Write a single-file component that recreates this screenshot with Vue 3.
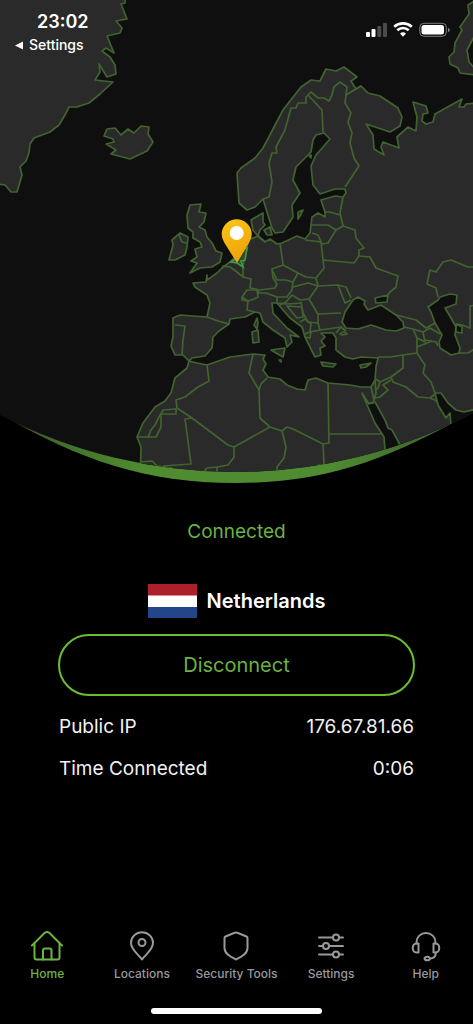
<template>
  <div class="app">
    <header class="top">
      <svg class="globe" viewBox="0 0 473 490" aria-hidden="true">
        <defs>
          <clipPath id="globe-clip">
            <path d="M0 0H473V413A511 511 0 0 1 0 415Z" />
          </clipPath>
          <linearGradient id="rim" x1="0" x2="1" y1="0" y2="0">
            <stop offset="0" stop-color="#2c3a24" />
            <stop offset="0.1" stop-color="#3f6a2b" />
            <stop offset="0.3" stop-color="#4f8b30" />
            <stop offset="0.7" stop-color="#4f8b30" />
            <stop offset="1" stop-color="#38582a" />
          </linearGradient>
          <linearGradient id="pin" x1="0" x2="0.4" y1="0" y2="1">
            <stop offset="0" stop-color="#fbc812" />
            <stop offset="1" stop-color="#eda20c" />
          </linearGradient>
        </defs>
        <path fill="url(#rim)" d="M0 414C80 460 145 483 236 483S389 459 473 412V405H0Z" />
        <g clip-path="url(#globe-clip)">
          <rect width="473" height="490" fill="#0f0f0f" />
          <path v-for="(d, i) in land" :key="'l' + i" class="land" :d="d" />
          <path v-for="(d, i) in seas" :key="'s' + i" class="sea" :d="d" />
          <path v-for="(d, i) in borders" :key="'b' + i" class="border" :d="d" />
          <path class="active" d="M231 262L237 258L242 249L247 248L245 260L241 261L243 267L237 263Z" />
        </g>
        <path fill="url(#pin)" d="M237 263L224.200 242.500A15 15 0 1 1 249.200 242.500Z" />
        <circle cx="236.700" cy="233" r="7" fill="#fff" />
      </svg>

      <div class="status">
        <div class="status-left">
          <span class="time">23:02</span>
          <a class="back" href="#">
            <svg width="8" height="9" viewBox="0 0 8 9" aria-hidden="true"><path d="M0 4.500L8 0.500V8.500Z" fill="#fff" /></svg>
            Settings
          </a>
        </div>
        <svg class="signals" width="86" height="18" viewBox="0 0 86 18" aria-hidden="true">
          <g fill="#fff">
            <rect x="1" y="11" width="4" height="5" rx="1" />
            <rect x="6.500" y="8" width="4" height="8" rx="1" />
            <rect x="12.300" y="5" width="4" height="11" rx="1" opacity="0.25" />
            <rect x="18" y="2" width="4" height="14" rx="1" opacity="0.25" />
          </g>
          <g fill="none" stroke="#fff" stroke-width="2.600">
            <path d="M29.200 5.800A13 13 0 0 1 46.800 5.800" />
            <path d="M32.300 9.300A8.400 8.400 0 0 1 43.700 9.300" />
          </g>
          <path d="M35 12.500A4.500 4.500 0 0 1 41 12.500L38 15.800Z" fill="#fff" />
          <rect x="54.800" y="2.300" width="26.500" height="13" rx="4" fill="none" stroke="#fff" stroke-opacity="0.450" />
          <rect x="56.500" y="4" width="22.500" height="9.600" rx="2.500" fill="#fff" />
          <path d="M83 7V11Q84.800 10.500 84.800 9T83 7Z" fill="#fff" opacity="0.500" />
        </svg>
      </div>
    </header>

    <main class="content">
      <p class="state">Connected</p>
      <div class="country">
        <svg class="flag" width="49" height="34" viewBox="0 0 49 34" aria-hidden="true">
          <rect width="49" height="34" fill="#fff" />
          <rect width="49" height="11.500" fill="#ae1f2c" />
          <rect y="23" width="49" height="11" fill="#23468b" />
        </svg>
        <h1>Netherlands</h1>
      </div>
      <button class="disconnect" type="button">Disconnect</button>
      <dl class="details">
        <div v-for="row in details" :key="row.label">
          <dt>{{ row.label }}</dt>
          <dd>{{ row.value }}</dd>
        </div>
      </dl>
    </main>

    <nav class="tabs">
      <a
        v-for="tab in tabs"
        :key="tab.name"
        href="#"
        :class="{ current: tab.name === current }"
        @click.prevent="current = tab.name"
      >
        <svg width="32" height="32" viewBox="0 0 32 32" aria-hidden="true">
          <path v-for="d in tab.icon" :key="d" :d="d" />
        </svg>
        <span>{{ tab.name }}</span>
      </a>
    </nav>
    <div class="home-bar"></div>
  </div>
</template>

<script setup>
import { ref } from 'vue'

const current = ref('Home')

const details = [
  { label: 'Public IP', value: '176.67.81.66' },
  { label: 'Time Connected', value: '0:06' },
]

const tabs = [
  {
    name: 'Home',
    icon: [
      'M1 15.500L13.500 3Q16 1 18.500 3L31 15.500',
      'M3.500 13.500V27.500Q3.500 29.500 5.500 29.500H26.500Q28.500 29.500 28.500 27.500V13.500',
      'M12 29.500V20.500Q12 18.500 14 18.500H18.500Q20.500 18.500 20.500 20.500V29.500',
    ],
  },
  {
    name: 'Locations',
    icon: [
      'M16 29.500C13 25 5 20 5 12.800A11 10.500 0 0 1 27 12.800C27 20 19 25 16 29.500Z',
      'M12.500 12.500A3.500 3.500 0 0 1 19.500 12.500A3.500 3.500 0 0 1 12.500 12.500Z',
    ],
  },
  {
    name: 'Security Tools',
    icon: ['M16 2.500Q17 2.500 18 3L26.500 6.500Q27.500 7 27.500 8.500V18C27.500 24 21 27 16 29.500C11 27 4.500 24 4.500 18V8.500Q4.500 7 5.500 6.500L14 3Q15 2.500 16 2.500Z'],
  },
  {
    name: 'Settings',
    icon: [
      'M4 7.500H18M24.500 7.500H28',
      'M4 16H7.500M14 16H28',
      'M4 24.500H18M24.500 24.500H28',
      'M18 7.500A3 3 0 0 1 24 7.500A3 3 0 0 1 18 7.500Z',
      'M8 16A3 3 0 0 1 14 16A3 3 0 0 1 8 16Z',
      'M18 24.500A3 3 0 0 1 24 24.500A3 3 0 0 1 18 24.500Z',
    ],
  },
  {
    name: 'Help',
    icon: [
      'M6.500 13.500V12A9.500 9 0 0 1 25.500 12V13.500',
      'M8.500 13.500V22.500H6.500C1.500 22.500 1.500 13.500 6.500 13.500Z',
      'M23.500 13.500V22.500H25.500C30.500 22.500 30.500 13.500 25.500 13.500Z',
      'M26 22.500Q25.500 28.500 20 28.500',
      'M14.500 28.500A2.800 2.300 0 0 1 20 28.500A2.800 2.300 0 0 1 14.500 28.500Z',
    ],
  },
]

const land = [
  // Greenland
  'M-3 -3L125 -3L125 3L121 4L127 19L116 21L122 28L120 33L107 36L114 53L106 48L102 51L110 57L115 65L116 74L107 77L99 64L100 72L95 80L113 82L100 94L89 103L77 107L69 107L65 115L59 125L50 132L34 138L30 144L29 153L26 161L20 167L22 175L17 192L11 192L5 185L-3 184Z',
  // Iceland
  'M104 136L107 129L115 128L121 135L128 129L134 133L141 126L149 127L148 134L153 142L147 151L130 159L111 154L116 150L106 144L114 142L113 139Z',
  // Novaya Zemlya
  'M476 0L468 5L469 14L460 27L462 30L455 43L454 52L449 57L450 64L458 68L460 73L476 75Z',
  // Europe, Asia and Africa
  'M476 103L466 104L464 107L459 107L462 99L435 114L433 122L426 124L422 121L423 114L428 113L426 106L413 102L417 117L416 131L408 127L397 137L399 148L383 142L381 147L384 155L374 149L373 135L366 124L390 132L400 126L402 117L398 108L380 96L368 93L361 86L356 89L351 81L357 77L344 67L336 71L326 69L320 81L311 80L301 87L283 110L263 148L255 158L241 168L237 173L239 203L247 210L255 207L263 199L272 228L275 233L283 232L287 226L293 217L292 205L300 193L293 180L296 167L311 152L313 140L316 135L324 133L330 139L316 155L311 166L313 185L320 194L335 189L345 189L346 193L343 197L335 196L321 200L325 212L325 217L318 213L312 217L310 233L305 239L297 236L282 243L277 244L270 239L265 242L257 235L253 230L251 220L263 213L263 222L265 225L260 230L258 236L248 240L247 250L239 254L230 262L222 268L217 273L207 280L207 275L206 282L193 283L195 287L207 295L210 303L207 317L180 315L173 318L173 337L171 346L175 355L183 355L189 361L192 358L205 356L212 348L213 337L219 331L229 324L230 319L245 317L255 312L260 313L263 322L273 330L285 338L287 347L292 342L290 335L299 337L287 328L273 313L272 303L277 303L283 310L290 318L302 327L305 337L308 343L315 357L321 355L320 348L325 346L321 341L325 337L321 333L333 333L336 338L336 350L345 357L353 359L361 357L378 358L376 367L375 380L371 387L361 387L350 385L328 383L316 378L308 380L305 390L297 389L287 385L280 379L268 377L263 370L266 364L263 359L265 355L253 354L230 357L207 365L197 363L189 361L187 368L175 378L171 393L165 401L155 407L143 423L137 437L141 447L140 490L476 490Z',
  // Great Britain
  'M190 205L201 204L199 212L206 213L204 222L199 227L205 230L207 237L212 243L216 251L222 253L220 262L212 267L200 268L190 273L197 263L191 261L197 257L195 249L202 247L200 242L193 238L193 232L188 228L187 215Z',
  // Ireland
  'M169 260L173 245L172 240L180 233L188 237L187 247L185 255L175 260Z',
  // islands
  'M257 318L254 325L257 329L258 323Z',
  'M252 332L258 330L259 342L253 343Z',
  'M271 350L285 348L283 357Z',
  'M321 362L336 364L333 367L323 366Z',
  'M360 365L371 363L366 367L361 368Z',
  'M264 230L270 227L272 235L267 235Z',
  'M298 212L303 210L300 216L298 219Z',
  'M309 156L311 155L311 158Z',
  'M279 360L281 360L281 362Z',
]

const seas = [
  // Kara Sea
  'M476 33L467 50L469 62L476 70Z',
  // Black Sea and Azov
  'M358 297L365 301L364 304L368 310L381 305L396 315L403 322L404 328L396 331L386 330L371 325L358 329L346 328L342 322L345 312L353 300Z',
  'M375 298L388 295L387 302L376 303Z',
  // Marmara
  'M340 334L344 332L347 334L342 335Z',
  // Caspian
  'M440 297L450 294L457 295L456 304L445 308L448 313L451 318L456 327L455 335L460 348L459 353L451 355L440 348L439 342L442 335L435 323L431 312L428 307L438 300Z',
  'M456 324L462 327L462 333L456 332Z',
  // Red Sea
  'M362 393L369 404L375 402L385 420L388 428L392 430L400 445L393 452L385 450L384 437L375 423L368 407Z',
  // Persian Gulf
  'M435 393L441 393L448 403L456 410L464 412L476 409L476 422L451 427L450 413L446 418L438 405Z',
]

const borders = [
  // Nordics and Baltics
  'M361 86L346 95L347 87L340 82L334 87L332 95L329 101L324 98L318 98L311 92L306 97L306 103L298 103L296 108L291 108L285 130L276 147L277 153L272 153L269 163L272 182L269 197L263 199',
  'M308 95L322 110L323 132',
  'M346 95L345 103L351 113L348 122L352 133L350 143L354 158L359 166L345 187',
  'M343 197L340 213L343 226L355 230L356 238L364 248L359 250L359 256L370 257L376 268L398 276L396 287L390 292L387 296',
  'M325 212L330 212L340 215',
  'M311 225L328 225L336 230L343 226',
  'M336 230L328 243L322 244L318 235L312 233',
  'M305 240L321 242L323 260L324 268L316 278',
  'M323 260L354 263L359 256',
  // Central and eastern Europe
  'M316 278L318 286L338 285L345 303L351 300',
  'M338 285L346 287L351 298',
  'M318 286L309 299L318 314L341 313',
  'M309 299L300 300L292 295',
  'M316 278L306 277L298 273',
  'M293 287L308 283L318 286',
  'M301 302L303 313L308 322L318 323L320 330L341 327L346 331',
  'M318 314L318 323',
  'M300 322L305 319L311 324L310 332L305 334',
  'M310 332L320 330',
  'M305 337L310 338L311 332',
  'M341 327L336 333',
  'M258 236L265 242',
  'M280 243L282 257L283 265L272 269L273 278L277 284L275 288L260 290L250 288L251 279L243 277L243 267L245 255',
  'M283 265L298 273L293 282L286 280L277 280L272 270',
  'M293 282L292 290L287 297L277 297L266 293L259 293L258 290',
  'M292 295L286 302L280 305',
  'M277 297L277 303L287 304L302 303',
  'M287 306L302 307L303 317L297 318Z',
  'M242 297L247 290L257 290L258 297L254 299L248 301Z',
  'M242 297L242 300L248 301L247 310L255 312',
  'M222 266L230 267L237 272L243 277',
  'M207 317L218 321L229 324',
  'M175 325L185 326L183 340L182 355',
  'M179 235L182 242L187 243',
  // Caucasus and Central Asia
  'M396 315L416 320L426 328L435 323',
  'M404 327L413 329L423 332L430 328L440 334',
  'M413 329L417 338L417 353L403 355L390 357L378 357',
  'M417 338L425 342L423 332',
  'M425 340L436 342L438 346',
  'M417 347L427 343L432 341',
  'M476 267L468 267L451 260L443 262L436 272L430 270L427 284L436 288L438 297',
  'M476 305L470 306L470 328L462 325L456 324',
  'M459 353L468 353L476 348',
  // Middle East
  'M403 355L403 368L391 377L380 382L376 379',
  'M417 353L425 365L423 373L431 382L435 393',
  'M391 377L393 382L406 387L418 397L430 398L435 394',
  'M391 380L383 385L388 390L380 397L375 398',
  'M375 380L376 393L373 403L369 403',
  'M380 382L378 388L376 390M371 387L374 400',
  'M430 398L435 400L438 403',
  // Africa
  'M328 383L329 443L323 444L324 465L318 465',
  'M329 434L383 434',
  'M323 444L293 429L287 427L282 431L270 427L260 418L259 390L249 373L253 354',
  'M259 390L261 384L267 378',
  'M270 427L234 447L228 445L192 418L177 408L176 400L185 397L198 387L209 381L207 365',
  'M234 447L234 457L228 465L217 467L207 468L202 474',
  'M217 467L217 476',
  'M176 408L176 414L161 414L161 427L156 437L137 437',
  'M176 409L163 410L159 417L155 425L151 430L148 437',
  'M192 418L185 419L191 464L163 466',
  'M140 462L152 461L157 466L172 468',
  'M282 431L286 447L284 458L277 467L277 476',
]
</script>

<style>
html,
body {
  background: #000;
}
body {
  margin: 0;
}
</style>

<style scoped>
.app {
  display: flex;
  flex-direction: column;
  min-height: 100vh;
  background: #000;
  color: #f2f2f2;
  font-family: Inter, "Liberation Sans", sans-serif;
}
.top {
  position: relative;
}
.globe {
  display: block;
  width: 100%;
  height: auto;
}
.land,
.sea,
.border {
  stroke: #41632f;
  stroke-width: 1.7;
  stroke-linejoin: round;
}
.land {
  fill: #2a2a2a;
}
.sea {
  fill: #0f0f0f;
}
.border {
  fill: none;
}
.active {
  fill: #2a4a2a;
  stroke: #3f9a44;
  stroke-width: 1.7;
}
/* status bar lies over the globe */
.status {
  position: absolute;
  top: 0;
  left: 0;
  right: 0;
  display: flex;
  justify-content: space-between;
  padding: 10px 22px 0 15px;
}
.status-left {
  display: flex;
  flex-direction: column;
}
.time {
  padding-left: 22px;
  font-size: 18px;
  font-weight: 600;
  line-height: 24px;
  color: #fff;
}
.back {
  display: flex;
  align-items: center;
  gap: 6px;
  font-size: 14px;
  font-weight: 500;
  line-height: 22px;
  color: #fff;
  text-decoration: none;
}
.signals {
  margin-top: 11px;
}
.content {
  display: flex;
  flex-direction: column;
  padding: 30px 58px 0;
  font-size: 19px;
  line-height: 24px;
}
.state {
  margin: 0;
  text-align: center;
  color: #6cb33f;
}
.country {
  display: flex;
  justify-content: center;
  align-items: center;
  gap: 10px;
  margin-top: 40px;
}
.flag {
  display: block;
}
h1 {
  margin: 0;
  font-size: 20px;
  font-weight: 600;
  line-height: 24px;
  color: #fff;
}
.disconnect {
  height: 62px;
  margin-top: 16px;
  border: 2px solid #6cbf2c;
  border-radius: 32px;
  background: transparent;
  color: #6cb33f;
  font: inherit;
  font-size: 20px;
  cursor: pointer;
}
.details {
  display: flex;
  flex-direction: column;
  gap: 18px;
  margin: 19px 1px 0;
}
.details div {
  display: flex;
  justify-content: space-between;
}
dd {
  margin: 0;
}
.tabs {
  display: grid;
  grid-template-columns: repeat(5, 1fr);
  margin-top: auto;
  padding-top: 24px;
}
.tabs a {
  display: flex;
  flex-direction: column;
  align-items: center;
  gap: 4px;
  color: #98989d;
  font-size: 12px;
  font-weight: 500;
  line-height: 16px;
  text-decoration: none;
  white-space: nowrap;
}
.tabs a.current {
  color: #6cb33f;
}
.tabs svg {
  fill: none;
  stroke: currentColor;
  stroke-width: 2;
  stroke-linecap: round;
  stroke-linejoin: round;
}
.home-bar {
  align-self: center;
  width: 36%;
  height: 6px;
  margin: 26px 0 10px;
  border-radius: 3px;
  background: #fff;
}
</style>
